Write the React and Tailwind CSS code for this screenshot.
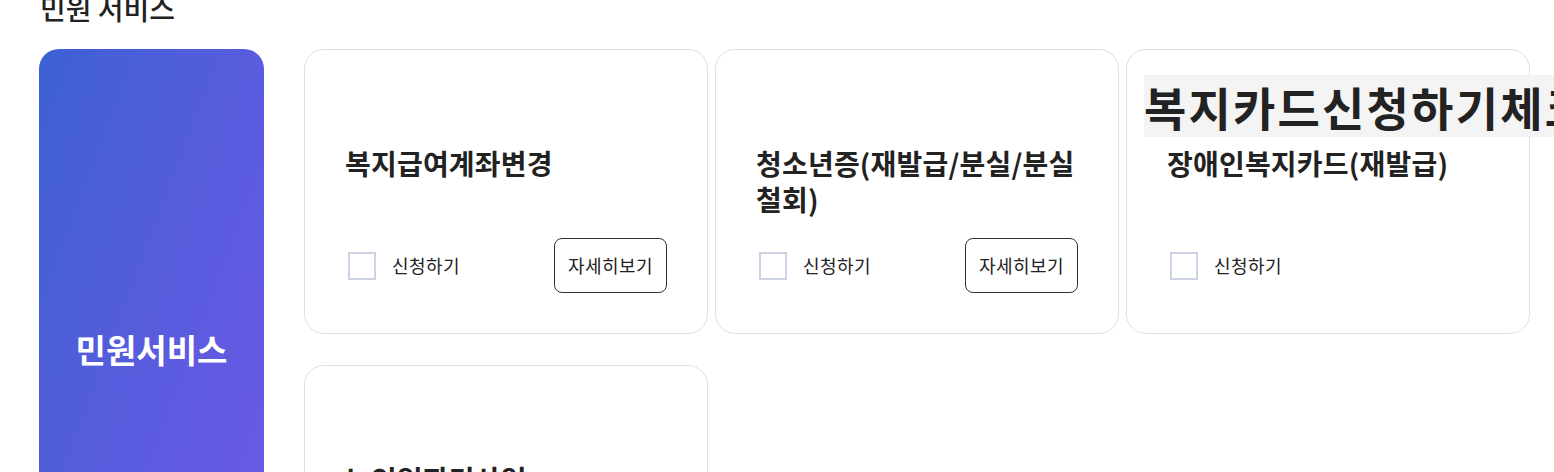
const FONT = { fontFamily: '"Noto Sans CJK KR", "Noto Sans", sans-serif' }

const SERVICES = [
  { title: '복지급여계좌변경', detail: true },
  { title: '청소년증(재발급/분실/분실 철회)', detail: true },
  { title: '장애인복지카드(재발급)', detail: false, label: '복지카드신청하기체크' },
  { title: '노인일자리사업', detail: true },
]

function ServiceCard({ item }) {
  return (
    <div className="relative flex h-[285px] flex-col rounded-[20px] border border-[#e0e0e0] bg-white px-10 pb-10">
      {item.label && (
        <span className="absolute left-[17px] top-[25px] whitespace-nowrap bg-[#f4f4f4] text-[46px] font-bold leading-[62px] tracking-[2.2px] text-[#222]">
          {item.label}
        </span>
      )}
      <h3 className="mt-[95px] text-[28px] font-bold leading-[36px] tracking-[0.2px] text-[#222]">{item.title}</h3>
      <div className="mt-auto flex h-[55px] items-center justify-between">
        <label className="flex items-center">
          <span className="ml-[3px] h-[28px] w-[28px] border-2 border-[#cdd3e4] bg-white" />
          <span className="ml-4 text-[18px] tracking-[0.4px] text-[#222]">신청하기</span>
        </label>
        {item.detail && (
          <button className="h-[55px] w-[113px] rounded-lg border border-[#333] text-[18px] tracking-[0.4px] text-[#222]">자세히보기</button>
        )}
      </div>
    </div>
  )
}

export default function App() {
  return (
    <div className="h-[472px] w-full overflow-hidden bg-white" style={FONT}>
      <div className="-mt-[10px]">
        <h2 className="ml-[40px] text-[28px] font-medium leading-[36px] text-[#222]">민원 서비스</h2>
        <div className="mt-[23px] flex gap-10 pl-[39px]">
          <div className="flex w-[225px] shrink-0 items-center justify-center rounded-[20px] bg-linear-to-br from-[#3c60d5] to-[#6f57e6]">
            <span className="text-[33px] font-bold text-white">민원서비스</span>
          </div>
          <div className="grid w-[1226px] shrink-0 grid-cols-3 gap-x-[7px] gap-y-[31px]">
            {SERVICES.map(s => (
              <ServiceCard key={s.title} item={s} />
            ))}
          </div>
        </div>
      </div>
    </div>
  )
}
